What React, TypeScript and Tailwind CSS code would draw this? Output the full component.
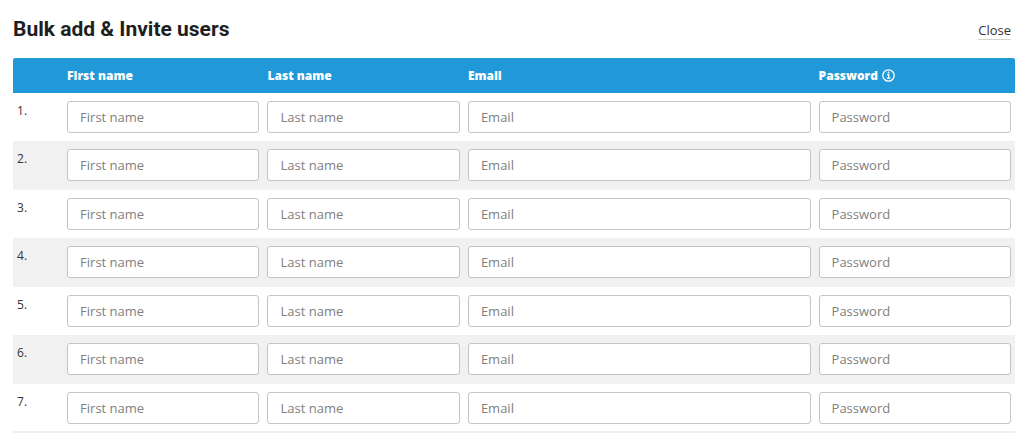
import { useState } from 'react';

type Field = 'firstName' | 'lastName' | 'email' | 'password';

type UserRow = Record<Field, string>;

const columns: { key: Field; label: string; width: string }[] = [
  { key: 'firstName', label: 'First name', width: 'w-[20%]' },
  { key: 'lastName', label: 'Last name', width: 'w-[20%]' },
  { key: 'email', label: 'Email', width: 'w-[35%]' },
  { key: 'password', label: 'Password', width: 'w-[20%]' },
];

const emptyRow: UserRow = {
  firstName: '',
  lastName: '',
  email: '',
  password: '',
};

function InfoIcon() {
  return (
    <svg
      viewBox="0 0 13 13"
      className="h-[13px] w-[13px]"
      fill="none"
      stroke="currentColor"
      aria-hidden="true"
    >
      <circle cx="6.5" cy="6.5" r="5.7" strokeWidth="1.3" />
      <path d="M5 5.6h1.7v3.6M4.7 9.2h3.8" strokeWidth="1.3" />
      <circle cx="6.5" cy="3.5" r="1" fill="currentColor" stroke="none" />
    </svg>
  );
}

export default function App() {
  const [rows, setRows] = useState<UserRow[]>(() =>
    Array.from({ length: 7 }, () => ({ ...emptyRow })),
  );

  const updateRow = (index: number, key: Field, value: string) => {
    setRows((prev) =>
      prev.map((row, i) => (i === index ? { ...row, [key]: value } : row)),
    );
  };

  return (
    <main className="bg-white pt-4 pr-[9px] pl-[13px] font-['Open_Sans',sans-serif] text-[#333]">
      <header className="flex items-center justify-between pr-1 pb-4">
        <h1 className="font-['Roboto',sans-serif] text-[21px] leading-[26px] font-bold text-[#1f1f1f]">
          Bulk add &amp; Invite users
        </h1>
        <a
          href="#"
          className="mt-0.5 border-b border-[#d4d4d4] text-[13px] leading-[18px]"
        >
          Close
        </a>
      </header>

      <table className="w-full table-fixed border-b-2 border-[#f0f0f0]">
        <thead>
          <tr className="h-[35px] text-left text-[12px] leading-4 text-white">
            <td className="w-[5%] rounded-tl-xs bg-[#2199d8]" />
            {columns.map((col) => (
              <th
                key={col.key}
                scope="col"
                className={`${col.width} bg-[#2199d8] px-1 font-extrabold last:rounded-tr-xs`}
              >
                <span className="flex items-center gap-1">
                  {col.label}
                  {col.key === 'password' && <InfoIcon />}
                </span>
              </th>
            ))}
          </tr>
        </thead>
        <tbody>
          {rows.map((row, index) => (
            <tr
              key={index}
              className="h-12 align-top even:h-[49px] even:bg-[#f1f1f1]"
            >
              <td className="px-1 pt-2 text-[12px] leading-5">
                {index + 1}.
              </td>
              {columns.map((col) => (
                <td key={col.key} className="px-1 pt-2">
                  <input
                    type={col.key === 'password' ? 'password' : 'text'}
                    aria-label={`${col.label} ${index + 1}`}
                    placeholder={col.label}
                    value={row[col.key]}
                    onChange={(e) => updateRow(index, col.key, e.target.value)}
                    className="block h-8 w-full rounded-[3px] border border-[#c4c4c4] bg-white px-3 text-[13px] leading-5 placeholder:text-[#808080] focus:border-[#2199d8] focus:outline-none"
                  />
                </td>
              ))}
            </tr>
          ))}
        </tbody>
      </table>
    </main>
  );
}
